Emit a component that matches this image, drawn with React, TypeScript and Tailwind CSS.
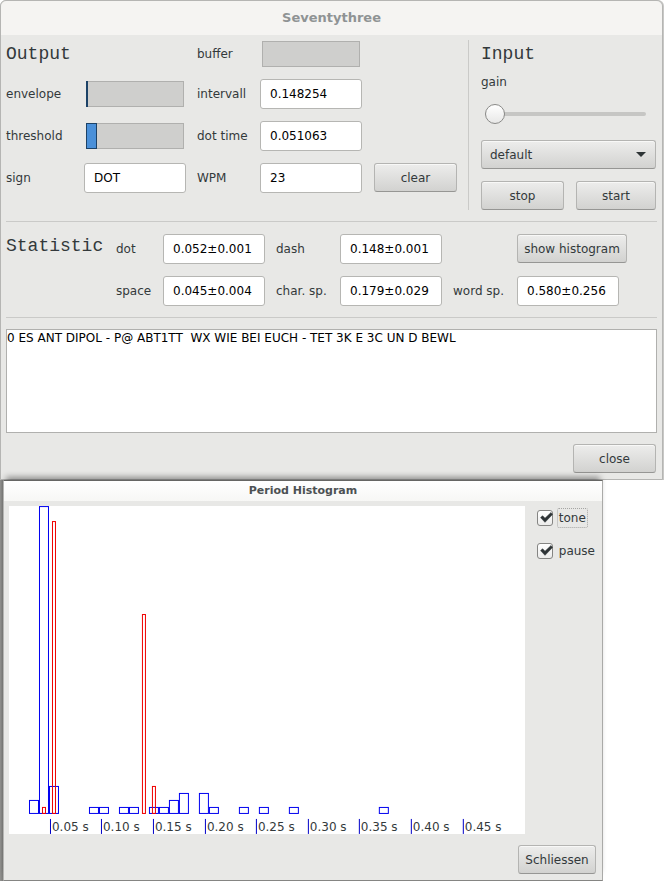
import { useState, type ButtonHTMLAttributes } from "react";
import { clsx } from "clsx";

const labelText = "text-[#33393b]";

function Button({ className, ...props }: ButtonHTMLAttributes<HTMLButtonElement>) {
  return (
    <button
      type="button"
      className={clsx(
        "h-[29px] self-start rounded-[3px] border border-[#b4b4b2] border-b-[#969694] bg-linear-to-b from-[#ededec] to-[#d2d2d0] text-center shadow-[inset_0_1px_0_#f8f8f7]",
        labelText,
        className,
      )}
      {...props}
    />
  );
}

function Field({ id, label, value }: { id: string; label: string; value: string }) {
  return (
    <>
      <label htmlFor={id} className={labelText}>
        {label}
      </label>
      <input
        id={id}
        type="text"
        defaultValue={value}
        className="h-[30px] w-[102px] rounded-[3px] border border-[#b6b6b3] bg-white px-[9px] text-black outline-none"
      />
    </>
  );
}

function Level({ label, fill }: { label: string; fill: number }) {
  return (
    <>
      <span className={labelText}>{label}</span>
      <div
        role="meter"
        aria-label={label}
        aria-valuenow={fill}
        aria-valuemin={0}
        aria-valuemax={98}
        className="relative mx-[2px] h-[26px] w-[98px] border border-[#b0b0ae] bg-[#cfcfcd]"
      >
        {fill > 0 && (
          <div
            className="absolute -top-px -left-px h-[26px] border border-[#1c4267] bg-[#4a90d9]"
            style={{ width: fill }}
          />
        )}
      </div>
    </>
  );
}

function Heading({ children }: { children: string }) {
  return (
    <h2 className="font-['Liberation_Mono',monospace] text-lg leading-5 text-[#33393b]">{children}</h2>
  );
}

function MainWindow() {
  return (
    <div className="rounded-t-md bg-[#c8c8c6] pr-px">
      <section className="rounded-t-md border border-[#b5b5b3] bg-[#e8e8e6]">
        <header className="flex h-[34px] items-center justify-center rounded-t-md bg-[#f5f4f2] text-[13px] font-bold text-[#8f9394]">
          <h1>Seventythree</h1>
        </header>

        <div className="px-[5px] pb-[6px]">
          <div className="flex pt-[5px]">
            <div className="grid grid-cols-[78px_113px_63px_114px_83px] grid-rows-[26px_30px_30px_30px] items-center gap-y-3 pt-px pr-[11px] pb-[17px]">
              <div className="col-span-2">
                <Heading>Output</Heading>
              </div>
              <Level label="buffer" fill={0} />
              <span />
              <Level label="envelope" fill={2} />
              <Field id="intervall" label="intervall" value="0.148254" />
              <span />
              <Level label="threshold" fill={11} />
              <Field id="dottime" label="dot time" value="0.051063" />
              <span />
              <Field id="sign" label="sign" value="DOT" />
              <Field id="wpm" label="WPM" value="23" />
              <Button>clear</Button>
            </div>

            <div className="flex flex-1 flex-col border-l border-[#cacac8] pr-px pl-3">
              <div className="mt-1">
                <Heading>Input</Heading>
              </div>
              <label htmlFor="gain" className={clsx("mt-[10px] leading-4", labelText)}>
                gain
              </label>
              <input
                id="gain"
                type="range"
                defaultValue={0}
                className="mt-[14px] mr-[10px] ml-1 h-5 appearance-none bg-transparent outline-none [&::-webkit-slider-runnable-track]:h-1 [&::-webkit-slider-runnable-track]:rounded-sm [&::-webkit-slider-runnable-track]:bg-[#c6c6c4] [&::-webkit-slider-thumb]:-mt-2 [&::-webkit-slider-thumb]:size-5 [&::-webkit-slider-thumb]:appearance-none [&::-webkit-slider-thumb]:rounded-full [&::-webkit-slider-thumb]:border [&::-webkit-slider-thumb]:border-[#8a8a88] [&::-webkit-slider-thumb]:bg-linear-to-b [&::-webkit-slider-thumb]:from-white [&::-webkit-slider-thumb]:to-[#e8e8e7]"
              />
              <div className="relative mt-4">
                <select
                  aria-label="Input device"
                  className={clsx(
                    "block h-[29px] w-full appearance-none rounded-[3px] border border-[#b4b4b2] border-b-[#969694] bg-linear-to-b from-[#ededec] to-[#d2d2d0] px-2 shadow-[inset_0_1px_0_#f8f8f7] outline-none",
                    labelText,
                  )}
                >
                  <option>default</option>
                </select>
                <svg
                  viewBox="0 0 10 5"
                  className="pointer-events-none absolute top-3 right-[10px] h-[5px] w-[10px] fill-[#2e3436]"
                >
                  <path d="M0 0h10L5 5z" />
                </svg>
              </div>
              <div className="mt-3 flex justify-between">
                <Button className="w-[83px]">stop</Button>
                <Button className="w-20">start</Button>
              </div>
            </div>
          </div>

          <div className="mt-[11px] border-t border-[#cacac8]" />

          <div className="grid grid-cols-[110px_47px_113px_64px_113px_64px_110px] items-center gap-y-3 pt-3 pb-[11px]">
            <div className="self-start pt-[2px]">
              <Heading>Statistic</Heading>
            </div>
            <Field id="dot" label="dot" value="0.052±0.001" />
            <Field id="dash" label="dash" value="0.148±0.001" />
            <span />
            <Button>show histogram</Button>
            <span />
            <Field id="space" label="space" value="0.045±0.004" />
            <Field id="charsp" label="char. sp." value="0.179±0.029" />
            <Field id="wordsp" label="word sp." value="0.580±0.256" />
          </div>

          <div className="border-t border-[#cacac8]" />

          <textarea
            aria-label="Decoded text"
            defaultValue="0 ES ANT DIPOL - P@ ABT1TT  WX WIE BEI EUCH - TET 3K E 3C UN D BEWL"
            className="mt-[11px] block h-[104px] w-full resize-none border border-[#b0b0ae] bg-white text-black outline-none"
          />
          <div className="mt-[11px] flex justify-end pr-px">
            <Button className="w-[83px]">close</Button>
          </div>
        </div>
      </section>
    </div>
  );
}

/* [left, top] of each bar; every bar stands on the baseline at BASE */
const BASE = 307;
const pauseBars = [
  [20, 294], [30, 0], [40, 280], [80, 301], [90, 301], [110, 301], [120, 301], [140, 301],
  [150, 301], [160, 294], [170, 287], [190, 287], [200, 301], [230, 301], [250, 301],
  [280, 301], [370, 301],
];
const toneBars = [[33, 301], [43, 15], [133, 108], [143, 280]];
const ticks: [number, string][] = [
  [41, "0.05 s"], [92, "0.10 s"], [144, "0.15 s"], [196, "0.20 s"], [247, "0.25 s"],
  [299, "0.30 s"], [350, "0.35 s"], [402, "0.40 s"], [454, "0.45 s"],
];

function Bars({ bars, width, color }: { bars: number[][]; width: number; color: string }) {
  return (
    <g fill="none" stroke={color}>
      {bars.map(([x, y]) => (
        <rect key={x} x={x + 0.5} y={y + 0.5} width={width} height={BASE - y} />
      ))}
    </g>
  );
}

function Check({ label, checked, onChange, focused }: {
  label: string;
  checked: boolean;
  onChange: (v: boolean) => void;
  focused?: boolean;
}) {
  return (
    <label className={clsx("flex h-5 items-center gap-1", labelText)}>
      <span className="relative size-4">
        <input
          type="checkbox"
          checked={checked}
          onChange={(e) => onChange(e.target.checked)}
          className="block size-4 appearance-none rounded-[3px] border border-[#858583] bg-linear-to-b from-white to-[#ececeb] outline-none"
        />
        {checked && (
          <svg viewBox="0 0 16 16" className="pointer-events-none absolute inset-0 size-4">
            <path d="M3.6 7.6 5.6 5.8 8 8.3 14 2.6 15.4 4.6 8 12.3z" fill="#2e3436" stroke="#2e3436" strokeWidth=".6" />
          </svg>
        )}
      </span>
      <span
        className={clsx(
          "rounded-[2px] border px-px leading-[18px]",
          focused ? "border-dotted border-[#a5a5a3]" : "border-transparent",
        )}
      >
        {label}
      </span>
    </label>
  );
}

function HistogramWindow() {
  const [tone, setTone] = useState(true);
  const [pause, setPause] = useState(true);
  return (
    <div className="flex">
      <div className="w-[3px] bg-linear-to-r from-[#929290] to-[#7c7c7a]" />
      <section className="w-[600px] max-w-full border border-t-[#666664] border-r-[#aaaaa8] border-b-[#858583] border-l-[#b5b5b3] bg-[#e8e8e6] shadow-[0_-6px_6px_-3px_rgba(0,0,0,0.4)]">
        <header className="flex h-5 items-center justify-center bg-linear-to-b from-white to-[#f7f7f5] text-[11px] font-bold text-[#4c5153]">
          <h2>Period Histogram</h2>
        </header>
        <div className="flex gap-3 pt-[5px] pr-[5px] pl-[5px]">
          <svg viewBox="0 0 516 328" className="h-[328px] w-[516px] bg-white" role="img" aria-label="Period histogram">
            {pause && <Bars bars={pauseBars} width={9} color="#0000f0" />}
            {tone && <Bars bars={toneBars} width={3} color="#f00000" />}
            {ticks.map(([x, text]) => (
              <g key={x}>
                <rect x={x} y={313} width={1} height={15} fill="#0000c8" />
                <text x={x + 2} y={325} fontSize={12} fill="#33393b">
                  {text}
                </text>
              </g>
            ))}
          </svg>
          <div className="flex flex-col gap-[13px] pt-[2px]">
            <Check label="tone" checked={tone} onChange={setTone} focused />
            <Check label="pause" checked={pause} onChange={setPause} />
          </div>
        </div>
        <div className="flex justify-end px-[6px] pt-[11px] pb-[6px]">
          <Button className="w-[78px]">Schliessen</Button>
        </div>
      </section>
    </div>
  );
}

export default function App() {
  return (
    <main className="min-h-screen bg-white font-['DejaVu_Sans',sans-serif] text-xs">
      <MainWindow />
      <HistogramWindow />
    </main>
  );
}
